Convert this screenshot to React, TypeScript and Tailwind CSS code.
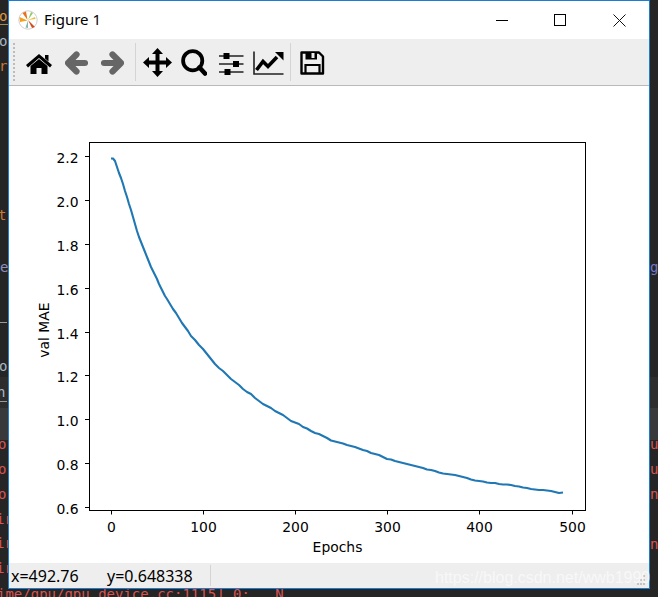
const mono = { fontFamily: '"DejaVu Sans Mono", monospace' };

// curve points in page pixels, the canvas svg viewBox starts at the canvas position
const curve: [number, number][] = [
  [111, 158.5], [113, 158.5], [115, 161], [117, 167], [119, 173], [121, 178], [123, 184], [125, 191], [127, 197],
  [129, 204], [131, 210], [133, 217], [135, 224], [137, 231], [139, 237], [141, 242], [143, 247], [145, 252],
  [147, 257], [149, 262], [151, 267], [153, 271], [155, 275], [157, 279], [159, 284], [161, 288], [163, 292],
  [165, 296], [167, 299], [170, 304], [173, 309], [176, 313], [179, 318], [182, 323], [185, 327], [188, 331],
  [191, 336], [195, 340], [199, 345], [203, 349], [207, 354], [211, 359], [215, 364], [219, 368], [223, 371],
  [227, 375], [231, 379], [235, 382], [239, 385], [243, 389], [247, 392], [251, 394], [255, 398], [259, 401],
  [263, 404], [267, 406], [271, 408], [275, 411], [279, 413], [283, 415], [287, 418], [291, 421], [295, 422.5],
  [299, 424], [303, 427], [307, 428.5], [311, 431], [315, 433], [319, 434], [323, 436], [327, 438], [331, 440.5],
  [335, 441.5], [339, 442.5], [343, 443.5], [347, 445], [351, 446], [355, 447], [359, 448.5], [363, 450], [367, 451],
  [371, 453], [375, 454], [379, 455], [383, 457], [387, 459], [391, 459.5], [395, 461], [399, 462], [403, 463],
  [407, 464], [411, 465], [415, 466], [419, 467], [423, 468], [427, 469.5], [431, 470], [435, 471], [439, 472.5],
  [443, 473.5], [447, 474], [451, 474.5], [455, 475], [459, 476], [463, 477], [467, 478], [471, 479.5], [475, 480.5],
  [479, 481], [483, 481.5], [487, 482.5], [491, 483], [495, 483], [499, 484], [503, 484.5], [507, 484.5], [511, 485],
  [515, 486], [519, 486.5], [523, 487.5], [527, 488], [531, 489], [535, 489.5], [539, 490], [543, 490], [547, 490.5],
  [551, 491], [555, 492], [559, 493], [563, 492.5],
];

const xTicks = [
  { x: 111.5, label: '0' }, { x: 203.5, label: '100' }, { x: 295.5, label: '200' },
  { x: 387.5, label: '300' }, { x: 479.5, label: '400' }, { x: 572.5, label: '500' },
];

const yTicks = [
  { y: 156.5, label: '2.2' }, { y: 200.5, label: '2.0' }, { y: 244.5, label: '1.8' }, { y: 288.5, label: '1.6' },
  { y: 332.5, label: '1.4' }, { y: 375.5, label: '1.2' }, { y: 419.5, label: '1.0' }, { y: 463.5, label: '0.8' }, { y: 507.5, label: '0.6' },
];

const codeBits = [
  { text: 'o', cls: 'top-[9px] left-[-1px] text-[#e2963c]' },
  { text: 'o', cls: 'top-[34px] left-[-1px] text-[#a9b7c6]' },
  { text: 'r', cls: 'top-[59px] left-[-1px] text-[#cc7832]' },
  { text: 't', cls: 'top-[208px] left-[-2px] text-[#cc7832]' },
  { text: 'e', cls: 'top-[260px] left-0 text-[#8a8fc0]' },
  { text: 'o', cls: 'top-[359px] left-[-1px] text-[#a9b7c6]' },
  { text: 'n', cls: 'top-[385px] left-[-3px] text-[#a9b7c6]' },
  { text: 'o.', cls: 'top-[437px] left-[-2px] text-[#d9534f]' },
  { text: 'o.', cls: 'top-[462px] left-[-2px] text-[#d9534f]' },
  { text: 'o.', cls: 'top-[487px] left-[-2px] text-[#d9534f]' },
  { text: 'ir', cls: 'top-[512px] left-[-4px] text-[#d9534f]' },
  { text: 'ir', cls: 'top-[536px] left-[-4px] text-[#d9534f]' },
  { text: 'ir', cls: 'top-[561px] left-[-4px] text-[#d9534f]' },
  { text: 'ge', cls: 'top-[260px] left-[650px] text-[#6f78c8]' },
  { text: 'us', cls: 'top-[437px] left-[650px] text-[#d9534f]' },
  { text: 'us', cls: 'top-[462px] left-[650px] text-[#d9534f]' },
  { text: 'nd', cls: 'top-[487px] left-[650px] text-[#d9534f]' },
  { text: 'ng', cls: 'top-[537px] left-[650px] text-[#d9534f]' },
];

function PythonLogo() {
  return (
    <svg width="20" height="20" viewBox="0 0 20 20">
      <circle cx="10" cy="10" r="9.2" fill="#fff" stroke="#cfcfcf" />
      <path d="M9.5 10.5 L1.5 7 L2 12 Z" fill="#f2a01e" />
      <path d="M9.5 10 L4.5 3 L8 1.5 Z" fill="#e8701e" />
      <path d="M10 10 L17 17 L14 18 Z" fill="#d9481c" />
      <path d="M10 10 L15 3 L13 2 Z" fill="#8fc860" />
      <path d="M10 10.5 L10 18 L7.5 17.5 Z" fill="#7fb8b0" />
      <path d="M10 10 L17.5 9 L17 7 Z" fill="#e8c040" />
    </svg>
  );
}

function Separator({ cls }: { cls: string }) {
  return <div className={`h-[38px] w-px bg-[#d4d4d4] ${cls}`} />;
}

function ToolIcon({ x, w, cls, children }: { x: number; w: number; cls: string; children: React.ReactNode }) {
  // viewBox uses page coordinates so paths can be read straight off the picture
  return (
    <svg width={w} height="46" viewBox={`${x} 39 ${w} 46`} className={`shrink-0 ${cls}`}>
      {children}
    </svg>
  );
}

export default function App() {
  return (
    <div className="relative h-[597px] w-[658px] overflow-hidden bg-[#252525]" style={mono}>
      {/* editor text peeking out around the window */}
      <div className="absolute top-[377px] left-0 h-[31px] w-full bg-[#2d2d2d]" />
      <div className="absolute top-[408px] left-0 h-[32px] w-full bg-[#37393b]" />
      <div className="absolute top-[24px] left-0 h-px w-[8px] bg-[#a08a55]" />
      <div className="absolute top-[322px] left-0 h-px w-[7px] bg-[#9a9a9a]" />
      <div className="absolute top-[401px] left-0 h-px w-[7px] bg-[#9a9a9a]" />
      {codeBits.map((b) => (
        <div key={b.cls} className={`absolute whitespace-pre text-[14px] leading-none ${b.cls}`}>{b.text}</div>
      ))}
      <div className="absolute top-[587px] left-[-3px] whitespace-pre text-[14px] leading-none text-[#d9534f]">ime/gpu/gpu_device.cc:1115] 0:   N</div>

      {/* Figure window */}
      <div className="relative ml-[8px] flex h-[589px] w-[642px] flex-col border border-[#1a7fd4] bg-white">
        <div className="flex h-[38px] shrink-0 items-center" style={{ fontFamily: '"Noto Sans", sans-serif' }}>
          <div className="ml-[9px]"><PythonLogo /></div>
          <span className="mb-[2px] ml-[6px] text-[15px] text-black">Figure 1</span>
          <div className="ml-auto flex items-center">
            <div className="mr-[46px] h-px w-[12px] bg-black" />
            <div className="mr-[47px] h-[12px] w-[12px] border border-black" />
            <svg width="13" height="13" viewBox="0 0 13 13" className="mr-[23px]">
              <path d="M0.5 0.5 L12.5 12.5 M12.5 0.5 L0.5 12.5" stroke="#111" strokeWidth="1" />
            </svg>
          </div>
        </div>

        <div className="flex h-[47px] shrink-0 items-center border-b border-[#b9b9b9] bg-[#eeeeee]">
          <div className="ml-[4px] h-[38px] w-[2px] bg-[repeating-linear-gradient(to_bottom,#bcbcbc_0,#bcbcbc_2px,transparent_2px,transparent_4px)]" />
          <ToolIcon x={26} w={26} cls="ml-[11px]">
            <path d="M26 65 L39 54 L52 65 L50 67.5 L39 58 L28 67.5 Z M45 55 H48.5 V61.5 L45 58.5 Z" fill="#000" />
            <path d="M30.5 66 L39 59 L47.5 66 V74 H41.5 V68 H36.5 V74 H30.5 Z" fill="#000" />
          </ToolIcon>
          <ToolIcon x={65} w={23} cls="ml-[13px]">
            <path d="M85 63 H70 M76.5 54.5 L68 63 L76.5 71.5" fill="none" stroke="#666" strokeWidth="6.2" strokeLinecap="round" strokeLinejoin="round" />
          </ToolIcon>
          <ToolIcon x={101} w={23} cls="ml-[13px]">
            <path d="M104 63 H119 M112.5 54.5 L121 63 L112.5 71.5" fill="none" stroke="#666" strokeWidth="6.2" strokeLinecap="round" strokeLinejoin="round" />
          </ToolIcon>
          <Separator cls="ml-[11px]" />
          <ToolIcon x={143} w={29} cls="ml-[7px]">
            <path d="M157.5 48 L163 54 H159.5 V60.5 H166 V57 L172 62.5 L166 68 V64.5 H159.5 V71 H163 L157.5 77 L152 71 H155.5 V64.5 H149 V68 L143 62.5 L149 57 V60.5 H155.5 V54 H152 Z" fill="#000" />
          </ToolIcon>
          <ToolIcon x={181} w={26} cls="ml-[9px]">
            <circle cx="192.7" cy="60.7" r="9.6" fill="none" stroke="#000" strokeWidth="3.8" />
            <path d="M199.5 67.5 L205 73.5" stroke="#000" strokeWidth="4.6" strokeLinecap="round" />
          </ToolIcon>
          <ToolIcon x={219} w={25} cls="ml-[12px]">
            <path d="M219 56 H243.5 M219 64 H243.5 M219 72 H243.5" stroke="#222" strokeWidth="1.6" />
            <path d="M223.5 53 H229.5 V59 H223.5 Z M233 61 H239 V67 H233 Z M224.5 69 H230.5 V75 H224.5 Z" fill="#000" />
          </ToolIcon>
          <ToolIcon x={253} w={31} cls="ml-[9px]">
            <path d="M254 51.5 V74 H283.5" fill="none" stroke="#222" strokeWidth="1.6" />
            <path d="M256.5 70 L263 61.5 L268 66.5 L277 57" fill="none" stroke="#000" strokeWidth="3.6" />
            <path d="M275 52 H283.5 V60.5 Z" fill="#000" />
          </ToolIcon>
          <Separator cls="ml-[6px]" />
          <ToolIcon x={300} w={25} cls="ml-[9px]">
            <path d="M301.5 52.5 H319 L323 56.5 V73.5 H301.5 Z" fill="none" stroke="#000" strokeWidth="2.4" strokeLinejoin="round" />
            <path d="M305.5 52 H317 V59.5 H305.5 Z" fill="#000" />
            <path d="M311.5 53 H314.5 V58 H311.5 Z" fill="#eeeeee" />
            <path d="M305.5 73 V65 H319.5 V73" fill="none" stroke="#000" strokeWidth="2.2" />
          </ToolIcon>
        </div>

        <div className="flex-1">
          <svg width="640" height="477" viewBox="9 86 640 477" className="block" style={{ fontFamily: '"DejaVu Sans", sans-serif' }}>
            <polyline
              fill="none"
              stroke="#1f77b4"
              strokeWidth="2.1"
              strokeLinejoin="round"
              points={curve.map(([x, y]) => `${x},${y}`).join(' ')}
            />
            <rect x="89.5" y="142.5" width="496" height="368" fill="none" stroke="#000" strokeWidth="1" />
            {xTicks.map((t) => (
              <g key={t.label}>
                <line x1={t.x} x2={t.x} y1="510.5" y2="514.5" stroke="#000" />
                <text x={t.x} y="531.5" textAnchor="middle" fontSize="13.9" fill="#000">{t.label}</text>
              </g>
            ))}
            {yTicks.map((t) => (
              <g key={t.label}>
                <line x1="85" x2="89" y1={t.y} y2={t.y} stroke="#000" />
                <text x="78.5" y={t.y + 6} textAnchor="end" fontSize="13.9" fill="#000">{t.label}</text>
              </g>
            ))}
            <text x="337.5" y="551.5" textAnchor="middle" fontSize="13.9" fill="#000">Epochs</text>
            <text transform="translate(49 330) rotate(-90)" textAnchor="middle" fontSize="13.9" fill="#000">val MAE</text>
          </svg>
        </div>

        <div className="flex h-[25px] shrink-0 items-center bg-[#eeeeee] text-[16px] text-black" style={{ fontFamily: '"Noto Sans", sans-serif' }}>
          <span className="ml-[2px] w-[96px]">x=492.76</span>
          <span className="w-[103px]">y=0.648338</span>
          <div className="h-[21px] w-px bg-[#d4d4d4]" />
        </div>
      </div>

      {/* blog watermark and the size grip under it */}
      <svg width="10" height="11" viewBox="0 0 10 11" className="absolute top-[575px] left-[636px]">
        <path d="M7 0 h2 v2 h-2 Z M4 4 h2 v2 h-2 Z M7 4 h2 v2 h-2 Z M1 8 h2 v2 h-2 Z M4 8 h2 v2 h-2 Z M7 8 h2 v2 h-2 Z" fill="#c4c4c4" />
      </svg>
      <div className="absolute top-[568px] left-[435px] whitespace-nowrap text-[16px] leading-[20px] text-white/60" style={{ fontFamily: '"Liberation Sans", sans-serif' }}>https://blog.csdn.net/wwb1990</div>
    </div>
  );
}
